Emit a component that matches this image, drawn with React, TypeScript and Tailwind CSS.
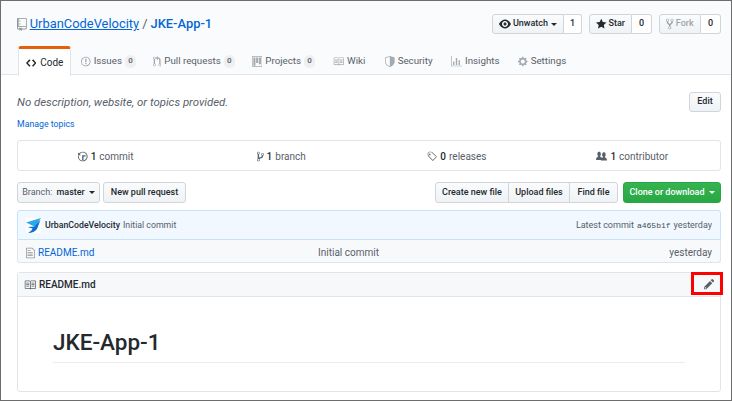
import type { ReactNode } from "react"

const icons = {
  repo: { w: 12, d: "M4 9H3V8h1v1zm0-3H3v1h1V6zm0-2H3v1h1V4zm0-2H3v1h1V2zm8-1v12c0 .55-.45 1-1 1H6v2l-1.5-1.5L3 16v-2H1c-.55 0-1-.45-1-1V1c0-.55.45-1 1-1h10c.55 0 1 .45 1 1zm-1 10H1v2h2v-1h3v1h5v-2zm0-10H2v9h9V1z" },
  code: { w: 14, d: "M9.5 3L8 4.5 11.5 8 8 11.5 9.5 13 14 8 9.5 3zm-5 0L0 8l4.5 5L6 11.5 2.5 8 6 4.5 4.5 3z" },
  issue: { w: 14, d: "M7 2.3c3.14 0 5.7 2.56 5.7 5.7s-2.56 5.7-5.7 5.7A5.71 5.71 0 0 1 1.3 8c0-3.14 2.56-5.7 5.7-5.7zM7 1C3.14 1 0 4.14 0 8s3.14 7 7 7 7-3.14 7-7-3.14-7-7-7zm1 3H6v5h2V4zm0 6H6v2h2v-2z" },
  pull: { w: 12, d: "M11 11.28V5c-.03-.78-.34-1.47-.94-2.06C9.46 2.35 8.78 2.03 8 2H7V0L4 3l3 3V4h1c.27.02.48.11.69.31.21.2.3.42.31.69v6.28A1.993 1.993 0 0 0 10 15a1.993 1.993 0 0 0 1-3.72zm-1 2.92c-.66 0-1.2-.55-1.2-1.2 0-.65.55-1.2 1.2-1.2.65 0 1.2.55 1.2 1.2 0 .65-.55 1.2-1.2 1.2zM4 3c0-1.11-.89-2-2-2a1.993 1.993 0 0 0-1 3.72v6.56A1.993 1.993 0 0 0 2 15a1.993 1.993 0 0 0 1-3.72V4.72c.59-.34 1-.98 1-1.72zm-.8 10c0 .66-.55 1.2-1.2 1.2-.65 0-1.2-.55-1.2-1.2 0-.65.55-1.2 1.2-1.2.65 0 1.2.55 1.2 1.2zM2 4.2C1.34 4.2.8 3.65.8 3c0-.65.55-1.2 1.2-1.2.65 0 1.2.55 1.2 1.2 0 .65-.55 1.2-1.2 1.2z" },
  project: { w: 15, d: "M10 12h3V2h-3v10zm-4-2h3V2H6v8zm-4 4h3V2H2v12zm-1 1h13V1H1v14zM14 0H1a1 1 0 0 0-1 1v14a1 1 0 0 0 1 1h13a1 1 0 0 0 1-1V1a1 1 0 0 0-1-1z" },
  book: { w: 16, d: "M3 5h4v1H3V5zm0 3h4V7H3v1zm0 2h4V9H3v1zm11-5h-4v1h4V5zm0 2h-4v1h4V7zm0 2h-4v1h4V9zm2-6v9c0 .55-.45 1-1 1H9.5l-1 1-1-1H2c-.55 0-1-.45-1-1V3c0-.55.45-1 1-1h5.5l1 1 1-1H15c.55 0 1 .45 1 1zm-8 .5L7.5 3H2v9h6V3.5zm7-.5H9.5l-.5.5V12h6V3z" },
  shield: { w: 14, d: "M0 2l7-2 7 2v6.02C14 12.69 8.69 16 7 16c-1.69 0-7-3.31-7-7.98V2zm1 .75v5.27C1 11.9 5.9 15 7 15V1L1 2.75z" },
  graph: { w: 16, d: "M16 14v1H0V0h1v14h15zM5 13H3V8h2v5zm4 0H7V3h2v10zm4 0h-2V6h2v7z" },
  gear: { w: 14, d: "M14 8.77v-1.6l-1.94-.64-.45-1.09.88-1.84-1.13-1.13-1.81.91-1.09-.45-.69-1.92h-1.6l-.63 1.94-1.11.45-1.84-.88-1.13 1.13.91 1.81-.45 1.09L0 7.23v1.59l1.94.64.45 1.09-.88 1.84 1.13 1.13 1.81-.91 1.09.45.69 1.92h1.59l.63-1.94 1.11-.45 1.84.88 1.13-1.13-.92-1.81.47-1.09L14 8.75v.02zM7 11c-1.66 0-3-1.34-3-3s1.34-3 3-3 3 1.34 3 3-1.34 3-3 3z" },
  eye: { w: 16, d: "M8.06 2C3 2 0 8 0 8s3 6 8.06 6C13 14 16 8 16 8s-3-6-7.94-6zM8 12c-2.2 0-4-1.78-4-4 0-2.2 1.8-4 4-4 2.22 0 4 1.8 4 4 0 2.22-1.78 4-4 4zm2-4c0 1.11-.89 2-2 2-1.11 0-2-.89-2-2 0-1.11.89-2 2-2 1.11 0 2 .89 2 2z" },
  star: { w: 14, d: "M14 6l-4.9-.64L7 1 4.9 5.36 0 6l3.6 3.26L2.67 14 7 11.67 11.33 14l-.93-4.74L14 6z" },
  fork: { w: 10, d: "M8 1a1.993 1.993 0 0 0-1 3.72V6L5 8 3 6V4.72A1.993 1.993 0 0 0 2 1a1.993 1.993 0 0 0-1 3.72V6.5l3 3v1.78A1.993 1.993 0 0 0 5 15a1.993 1.993 0 0 0 1-3.72V9.5l3-3V4.72A1.993 1.993 0 0 0 8 1zM2 4.2C1.34 4.2.8 3.65.8 3c0-.65.55-1.2 1.2-1.2.65 0 1.2.55 1.2 1.2 0 .65-.55 1.2-1.2 1.2zm3 10c-.66 0-1.2-.55-1.2-1.2 0-.65.55-1.2 1.2-1.2.65 0 1.2.55 1.2 1.2 0 .65-.55 1.2-1.2 1.2zm3-10c-.66 0-1.2-.55-1.2-1.2 0-.65.55-1.2 1.2-1.2.65 0 1.2.55 1.2 1.2 0 .65-.55 1.2-1.2 1.2z" },
  history: { w: 14, d: "M8 13H6V6h5v2H8v5zM7 1C4.81 1 2.87 2.02 1.59 3.59L0 2v4h4L2.5 4.5C3.55 3.17 5.17 2.3 7 2.3c3.14 0 5.7 2.56 5.7 5.7s-2.56 5.7-5.7 5.7A5.71 5.71 0 0 1 1.3 8c0-.34.03-.67.09-1H.08C.03 7.33 0 7.66 0 8c0 3.86 3.14 7 7 7s7-3.14 7-7-3.14-7-7-7z" },
  branch: { w: 10, d: "M10 5c0-1.11-.89-2-2-2a1.993 1.993 0 0 0-1 3.72v.3c-.02.52-.23.98-.63 1.38-.4.4-.86.61-1.38.63-.83.02-1.48.16-2 .45V4.72a1.993 1.993 0 0 0-1-3.72C.88 1 0 1.89 0 3a2 2 0 0 0 1 1.72v6.56c-.59.35-1 .99-1 1.72 0 1.11.89 2 2 2 1.11 0 2-.89 2-2 0-.53-.2-1-.53-1.36.09-.06.48-.41.59-.47.25-.11.56-.17.94-.17 1.05-.05 1.95-.45 2.75-1.25S8.95 7.77 9 6.73h-.02C9.59 6.37 10 5.73 10 5zM2 1.8c.66 0 1.2.55 1.2 1.2 0 .65-.55 1.2-1.2 1.2C1.35 4.2.8 3.65.8 3c0-.65.55-1.2 1.2-1.2zm0 12.41c-.66 0-1.2-.55-1.2-1.2 0-.65.55-1.2 1.2-1.2.65 0 1.2.55 1.2 1.2 0 .65-.55 1.2-1.2 1.2zm6-8c-.66 0-1.2-.55-1.2-1.2 0-.65.55-1.2 1.2-1.2.65 0 1.2.55 1.2 1.2 0 .65-.55 1.2-1.2 1.2z" },
  tag: { w: 15, d: "M7.73 1.73C7.26 1.26 6.62 1 5.96 1H3.5C2.13 1 1 2.13 1 3.5v2.47c0 .66.27 1.3.73 1.77l6.06 6.06c.39.39 1.02.39 1.41 0l4.59-4.59a.996.996 0 0 0 0-1.41L7.73 1.73zM2.38 7.09c-.31-.3-.47-.7-.47-1.13V3.5c0-.88.72-1.59 1.59-1.59h2.47c.42 0 .83.16 1.13.47l6.14 6.13-4.73 4.73-6.13-6.15zM3 4h2v2H3V4z" },
  org: { w: 16, d: "M16 12.999c0 .439-.45 1-1 1H7.995c-.539 0-.994-.447-.995-.999H1c-.54 0-1-.561-1-1 0-2.634 3-4 3-4s.229-.409 0-1c-.841-.621-1.058-.59-1-3 .058-2.419 1.367-3 2.5-3s2.442.58 2.5 3c.058 2.41-.159 2.379-1 3-.229.59 0 1 0 1s1.549.711 2.42 2.088C9.196 9.369 10 8.999 10 8.999s.229-.409 0-1c-.841-.62-1.058-.59-1-3 .058-2.419 1.367-3 2.5-3s2.437.581 2.495 3c.059 2.41-.158 2.38-1 3-.229.59 0 1 0 1s3.005 1.366 3.005 4z" },
  file: { w: 12, d: "M6 5H2V4h4v1zM2 8h7V7H2v1zm0 2h7V9H2v1zm0 2h7v-1H2v1zm10-7.5V14c0 .55-.45 1-1 1H1c-.55 0-1-.45-1-1V2c0-.55.45-1 1-1h7.5L12 4.5zM11 5L8 2H1v12h10V5z" },
  pencil: { w: 14, d: "M0 12v3h3l8-8-3-3-8 8zm3 2H1v-2h1v1h1v1zm10.3-9.3L12 6 9 3l1.3-1.3a.996.996 0 0 1 1.41 0l1.59 1.59c.39.39.39 1.02 0 1.41z" },
}

function Octicon({ name, size = 12, className = "" }: { name: keyof typeof icons; size?: number; className?: string }) {
  const icon = icons[name]
  return (
    <svg width={(size * icon.w) / 16} height={size} viewBox={`0 0 ${icon.w} 16`} fill="currentColor" fillRule="evenodd" className={`shrink-0 ${className}`}>
      <path d={icon.d} />
    </svg>
  )
}

function Caret({ className = "" }: { className?: string }) {
  return <span className={`inline-block h-0 w-0 border-x-[3px] border-t-[3px] border-x-transparent ${className}`} />
}

function Counter({ children }: { children: ReactNode }) {
  return <span className="ml-[3px] flex h-[13px] w-[11px] items-center justify-center rounded-full bg-[#eeeff1] text-[8px] font-medium text-[#586069]">{children}</span>
}

const btn = "flex items-center justify-center border border-[#d1d5da] bg-gradient-to-b from-[#fafbfc] to-[#eff3f6] text-[9px] font-medium text-[#24292e]"

function RepoAction({ icon, label, count, labelWidth, countWidth, caret, muted }: { icon: keyof typeof icons; label: string; count: string; labelWidth: string; countWidth: string; caret?: boolean; muted?: boolean }) {
  return (
    <div className="flex h-[20px]">
      <div className={`${btn} ${labelWidth} gap-[2px] rounded-l-[3px] ${muted ? "!text-[#9fa4a9]" : ""}`}>
        <Octicon name={icon} size={12} className={muted ? "text-[#9fa4a9]" : "text-[#24292e]"} />
        {label}
        {caret && <Caret className="ml-px border-t-[#24292e]" />}
      </div>
      <div className={`flex items-center justify-center rounded-r-[3px] border border-l-0 border-[#d1d5da] bg-white text-[9px] font-medium text-[#24292e] ${countWidth}`}>{count}</div>
    </div>
  )
}

const tabs: { icon: keyof typeof icons; label: string; count?: string; width: string }[] = [
  { icon: "issue", label: "Issues", count: "0", width: "w-[72px]" },
  { icon: "pull", label: "Pull requests", count: "0", width: "w-[99px]" },
  { icon: "project", label: "Projects", count: "0", width: "w-[81px]" },
  { icon: "book", label: "Wiki", width: "w-[52px]" },
  { icon: "shield", label: "Security", width: "w-[66px]" },
  { icon: "graph", label: "Insights", width: "w-[67px]" },
  { icon: "gear", label: "Settings", width: "w-[70px]" },
]

const stats = [
  { icon: "history" as const, n: "1", label: "commit" },
  { icon: "branch" as const, n: "1", label: "branch" },
  { icon: "tag" as const, n: "0", label: "releases" },
  { icon: "org" as const, n: "1", label: "contributor" },
]

export default function App() {
  return (
    <div className="relative h-[401px] w-[732px] overflow-hidden border border-[#6d6d6d] bg-white font-['Roboto',sans-serif] whitespace-nowrap text-[#24292e]">
      {/* Repo header */}
      <div className="h-[74px] border-b border-[#e1e4e8] bg-[#fafbfc]">
        <div className="flex h-[45px] items-start justify-between pt-[13px] pr-[10px] pl-4">
          <h1 className="flex h-5 items-center text-[12.9px] leading-5 text-[#586069]">
            <Octicon name="repo" size={13} className="mr-[3px] text-[#8f959b]" />
            <a className="text-[#0366d6] underline">UrbanCodeVelocity</a>
            <span className="mx-[3px]">/</span>
            <a className="font-medium text-[#0366d6]">JKE-App-1</a>
          </h1>
          <div className="flex gap-[7px]">
            <RepoAction icon="eye" label="Unwatch" count="1" caret labelWidth="w-[72px]" countWidth="w-[18px]" />
            <RepoAction icon="star" label="Star" count="0" labelWidth="w-[43px]" countWidth="w-[20px]" />
            <RepoAction icon="fork" label="Fork" count="0" labelWidth="w-[42px]" countWidth="w-[20px]" muted />
          </div>
        </div>
        <div className="flex h-[29px] pl-[17px]">
          <div className="flex h-[30px] w-[53px] items-center justify-center gap-1 rounded-t-[3px] border-x border-t-[3px] border-x-[#e1e4e8] border-t-[#e36209] bg-white text-[10px] text-[#24292e]">
            <Octicon name="code" size={12} />
            Code
          </div>
          {tabs.map((t) => (
            <div key={t.label} className={`flex items-center pt-[1px] pl-[10px] text-[9.75px] text-[#586069] ${t.width}`}>
              <Octicon name={t.icon} size={11} className="mr-[3px] text-[#a3aab1]" />
              {t.label}
              {t.count && <Counter>{t.count}</Counter>}
            </div>
          ))}
        </div>
      </div>

      <div className="pr-[10px] pl-4">
        {/* Description */}
        <div className="flex items-start justify-between pt-[17px]">
          <p className="text-[11.4px] leading-5 text-[#586069] italic">No description, website, or topics provided.</p>
          <div className={`${btn} h-5 w-[32px] rounded-[3px]`}>Edit</div>
        </div>
        <a className="mt-1 block text-[8.75px] leading-4 text-[#0366d6]">Manage topics</a>

        {/* Stats */}
        <div className="mt-[8px] grid h-[31px] grid-cols-4 rounded-[3px] border border-[#e1e4e8]">
          {stats.map((s) => (
            <div key={s.label} className="flex items-center justify-center pt-[2px] text-[10px] text-[#586069]">
              <Octicon name={s.icon} size={11} className="mr-[3px] text-[#586069]" />
              <span className="mr-[3px] font-medium text-[#24292e]">{s.n}</span>
              {s.label}
            </div>
          ))}
        </div>

        {/* Branch toolbar */}
        <div className="mt-[11px] flex h-[21px] items-stretch">
          <div className={`${btn} w-[83px] gap-1 rounded-[3px]`}>
            <span className="font-normal text-[#586069]">Branch:</span> master <Caret className="border-t-[#24292e]" />
          </div>
          <div className={`${btn} ml-[3px] w-[83px] rounded-[3px]`}>New pull request</div>
          <div className="ml-auto flex">
            <div className={`${btn} w-[74px] rounded-l-[3px]`}>Create new file</div>
            <div className={`${btn} -ml-px w-[62px]`}>Upload files</div>
            <div className={`${btn} -ml-px w-[49px] rounded-r-[3px]`}>Find file</div>
          </div>
          <div className="ml-[5px] flex w-[98px] items-center justify-center gap-1 rounded-[3px] border border-[#28a745] bg-gradient-to-b from-[#34b350] to-[#28a745] text-[9px] font-medium text-white">
            Clone or download <Caret className="border-t-white" />
          </div>
        </div>

        {/* Commit tease */}
        <div className="mt-[7px] flex h-[30px] items-center justify-between rounded-t-[3px] border border-[#c8e1ff] bg-[#f1f8ff] pr-2 pl-2 text-[8.75px] text-[#586069]">
          <div className="flex items-center">
            <svg width="15" height="15" viewBox="0 0 15 15" className="mr-[4px] bg-white">
              <path d="M0 4.5 L15 0 L9.5 9 Z" fill="#29a9ea" />
              <path d="M1.5 9 L8.5 8.5 L14.5 2 L11 11 Q8 15 2 15 Q6 12.5 6.5 10.5 Z" fill="#0d6fd1" />
            </svg>
            <span className="mr-[3px] pt-[2px] font-medium text-[#24292e]">UrbanCodeVelocity</span>
            <span className="pt-[2px]">Initial commit</span>
          </div>
          <div className="flex items-center pt-[2px] text-[9px]">
            Latest commit
            <span className="mx-[3px] font-['Liberation_Mono',monospace] text-[8px] text-[#444d56]">a465b1f</span>
            yesterday
          </div>
        </div>

        {/* File row */}
        <div className="flex h-[23px] items-center rounded-b-[3px] border border-t-0 border-[#e1e4e8] bg-[#f8f9fb] pt-[3px] pr-2 pl-2 text-[10px] text-[#586069]">
          <div className="flex w-[292px] items-center">
            <Octicon name="file" size={12} className="mr-[3px] text-[#8f959b]" />
            <a className="text-[#0366d6]">README.md</a>
          </div>
          <div>Initial commit</div>
          <div className="ml-auto">yesterday</div>
        </div>

        {/* Readme */}
        <div className="mt-[9px] h-[120px] rounded-[3px] border border-[#e1e4e8]">
          <div className="flex h-[24px] items-center border-b border-[#e1e4e8] bg-[#f6f8fa] pl-[6px] text-[10px] font-medium">
            <Octicon name="book" size={12} className="mr-[3px] text-[#586069]" />
            README.md
          </div>
          <div className="pt-[27px] pr-[35px] pl-[35px]">
            <h2 className="h-[39px] border-b border-[#eaecef] text-[22.5px] leading-[36px] font-medium">JKE-App-1</h2>
          </div>
        </div>
      </div>

      {/* Highlighted edit button */}
      <div className="absolute top-[271px] left-[690px] flex h-[23px] w-[32px] items-center justify-center border-[3px] border-[#ff0000] bg-[#f6f8fa] pt-[1px] pl-[4px]">
        <Octicon name="pencil" size={12} className="text-[#586069]" />
      </div>
    </div>
  )
}
